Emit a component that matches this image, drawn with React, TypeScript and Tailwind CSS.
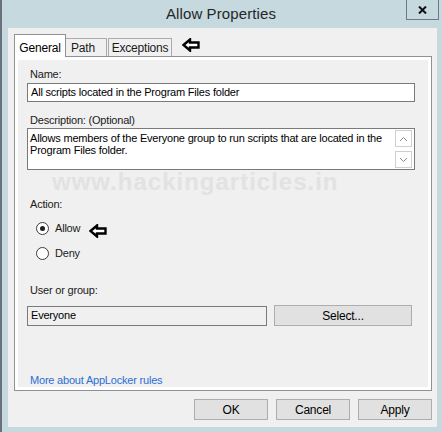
import React from "react"

const font = { fontFamily: '"Liberation Sans", Arial, sans-serif' }

const Arrow = () => (
    <svg width="18" height="14" viewBox="0 0 18 14">
        <path d="M1.5 7 L8 1.5 L8 4.5 L16.5 4.5 L16.5 9.5 L8 9.5 L8 12.5 Z" fill="white" stroke="black" strokeWidth="2.4" strokeLinejoin="miter"/>
    </svg>
)

const Radio = ({ checked, label }: { checked?: boolean, label: string }) => (
    <div className="flex items-center h-4 ml-[9px]">
        <div className="w-[13px] h-[13px] rounded-full border border-[#3c3c3c] bg-white flex items-center justify-center">
            {checked && <div className="w-[5px] h-[5px] rounded-full bg-[#1f1f1f]"/>}
        </div>
        <span className="ml-[6px]">{label}</span>
    </div>
)

const WinButton = ({ label, w }: { label: string, w: string }) => (
    <div className={`${w} h-[21px] bg-[#e1e1e1] border border-[#adadad] flex items-center justify-center text-[12px] text-black`}>
        {label}
    </div>
)

const Chevron = ({ up }: { up?: boolean }) => (
    <svg width="9" height="6" viewBox="0 0 9 6">
        <path d={up ? "M1 5 L4.5 1.5 L8 5" : "M1 1 L4.5 4.5 L8 1"} fill="none" stroke="#8a8a8a" strokeWidth="1"/>
    </svg>
)

export default function App() {
    return (
        <div className="w-[442px] h-[432px] bg-[#c5d9df] border-l-2 border-[#67727d] flex flex-col overflow-hidden" style={font}>
            {/* title bar */}
            <div className="relative h-[28px] shrink-0 flex items-center justify-center">
                <span className="text-[15px] text-[#262626] tracking-[0.1px] -ml-[2px]">Allow Properties</span>
                <div className="absolute right-[3px] top-0 w-[33px] h-[20px] border border-t-0 border-[#6e7883] flex items-center justify-center">
                    <svg width="9" height="8" viewBox="0 0 9 8">
                        <path d="M1 0.5 L8 7.5 M8 0.5 L1 7.5" stroke="#111" strokeWidth="2"/>
                    </svg>
                </div>
            </div>

            {/* body */}
            <div className="ml-[6px] mr-[5px] h-[399px] bg-[#f0f0f0] flex flex-col text-[11px] tracking-[-0.2px] text-[#1a1a1a]">
                {/* tabs */}
                <div className="flex items-end h-[29px] pl-[6px] relative z-10">
                    <div className="w-[52px] h-[23px] bg-white border border-b-0 border-[#8e9196] flex items-start pt-[4px] justify-center text-[12px] text-black">General</div>
                    <div className="w-[41px] h-[18px] bg-[#f0f0f0] border border-l-0 border-b-0 border-[#a9abaf] flex items-center pl-[5px] mb-[1px] text-[12px]">Path</div>
                    <div className="w-[64px] h-[18px] bg-[#f0f0f0] border border-b-0 border-[#a9abaf] flex items-center justify-center mb-[1px] ml-[1px] text-[12px]">Exceptions</div>
                    <div className="ml-[10px] mb-[5px]"><Arrow/></div>
                </div>

                {/* tab page */}
                <div className="ml-[6px] w-[418px] h-[335px] -mt-[1px] border border-[#8e9196] bg-white p-[3px]">
                    <div className="relative h-full bg-[#f0f0f0] pl-[9px] pr-[13px] pt-[7px] flex flex-col">
                        <span className="ml-[3px] leading-[14px]">Name:</span>
                        <div className="mt-[2px] h-[20px] bg-white border border-[#7a7a7a] flex items-center px-[3px] text-black">
                            All scripts located in the Program Files folder
                        </div>
                        <span className="ml-[3px] mt-[11px] leading-[14px]">Description: (Optional)</span>
                        <div className="mt-[1px] h-[42px] bg-white border border-[#7a7a7a] flex text-black">
                            <div className="flex-1 px-[2px] pt-[3px] leading-[12px]">
                                Allows members of the Everyone group to run scripts that are located in the Program Files folder.
                            </div>
                            <div className="w-[17px] mr-[2px] my-[1px] flex flex-col gap-[4px]">
                                <div className="h-[17px] border border-[#cfcfcf] bg-white flex items-center justify-center"><Chevron up/></div>
                                <div className="h-[17px] border border-[#cfcfcf] bg-white flex items-center justify-center"><Chevron/></div>
                            </div>
                        </div>

                        <span className="ml-[3px] mt-[27px] leading-[14px]">Action:</span>
                        <div className="mt-[7px] flex items-center">
                            <Radio checked label="Allow"/>
                            <div className="ml-[9px] mt-[6px]"><Arrow/></div>
                        </div>
                        <div className="mt-[7px]"><Radio label="Deny"/></div>

                        <span className="ml-[3px] mt-[22px] leading-[14px]">User or group:</span>
                        <div className="mt-[8px] flex items-center">
                            <div className="w-[240px] h-[20px] border border-[#7a7a7a] bg-[#f0f0f0] flex items-center px-[3px] text-black">Everyone</div>
                            <div className="ml-[7px]"><WinButton label="Select..." w="w-[138px]"/></div>
                        </div>

                        <span className="ml-[3px] mt-[47px] leading-[14px] text-[#2a6fd2]">More about AppLocker rules</span>

                        <div className="absolute left-[34px] top-[110px] text-[24px] font-bold text-[#e2e2e2] tracking-[1px] leading-none select-none">
                            www.hackingarticles.in
                        </div>
                    </div>
                </div>

                {/* bottom buttons */}
                <div className="flex justify-end gap-[8px] pr-[5px] mt-[8px]">
                    <WinButton label="OK" w="w-[74px]"/>
                    <WinButton label="Cancel" w="w-[74px]"/>
                    <WinButton label="Apply" w="w-[74px]"/>
                </div>
            </div>
        </div>
    )
}
